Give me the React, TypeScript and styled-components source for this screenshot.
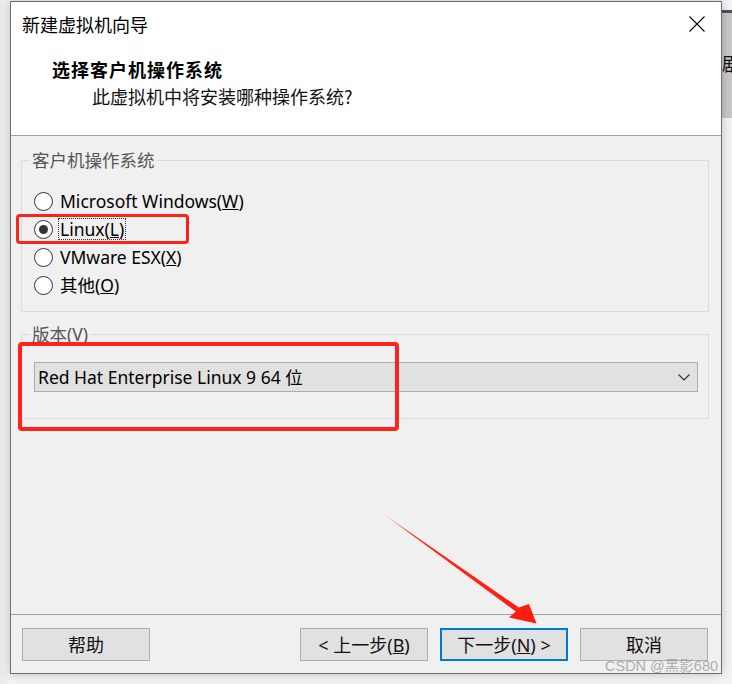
import React from "react";
import styled, { createGlobalStyle, css } from "styled-components";

const GlobalStyle = createGlobalStyle`
  html, body {
    margin: 0;
    padding: 0;
    background: #f4f4f4;
    width: 732px;
    height: 684px;
    overflow: hidden;
  }
  * { box-sizing: border-box; }
`;

const UI_FONT = `"Noto Sans", "Noto Sans CJK SC", sans-serif`;
const CJK_FONT = `"Noto Sans CJK SC", "Noto Sans", sans-serif`;

const Stage = styled.div`
  position: relative;
  width: 732px;
  height: 684px;
  padding: 1px 0 0 10px;
  background: linear-gradient(to right, #e9e9e9 0px, #f3f3f3 10px);
`;

const BehindWindow = styled.div`
  position: absolute;
  left: 722px;
  top: 10px;
  width: 10px;
  height: 108px;
  background: #c7c7c7;
  border-top: 3px solid #4b5361;
  overflow: hidden;
  font-family: ${CJK_FONT};
  font-size: 18px;
  line-height: 20px;
  color: #111;
  padding-top: 40px;
`;

const Dialog = styled.div`
  position: relative;
  width: 712px;
  height: 673px;
  border: 1px solid #6f6f6f;
  background: #f0f0f0;
  display: flex;
  flex-direction: column;
  box-shadow: 0 0 9px rgba(0, 0, 0, 0.22);
`;

const Header = styled.div`
  height: 134px;
  flex: none;
  background: #ffffff;
  border-bottom: 1px solid #a0a0a0;
  display: flex;
  flex-direction: column;
`;

const TitleBar = styled.div`
  height: 43px;
  display: flex;
  align-items: center;
  justify-content: space-between;
  padding: 0 16px 0 11px;
`;

const Title = styled.div`
  font-family: ${CJK_FONT};
  font-size: 18px;
  line-height: 24px;
  color: #000;
`;

const CloseButton = styled.div`
  width: 16px;
  height: 16px;
  display: flex;
`;

const Heading = styled.div`
  margin-top: 12px;
  padding-left: 41px;
  font-family: ${CJK_FONT};
  font-size: 18px;
  font-weight: 700;
  letter-spacing: 1px;
  line-height: 24px;
  color: #000;
`;

const Subtitle = styled.div`
  margin-top: 3px;
  padding-left: 81px;
  font-family: ${CJK_FONT};
  font-size: 18px;
  line-height: 24px;
  color: #111;
`;

const Body = styled.div`
  flex: 1;
  padding: 14px 12px 0 10px;
  display: flex;
  flex-direction: column;
  gap: 12px;
`;

const Group = styled.fieldset<{ $pt: number; $pb: number }>`
  margin: 0;
  border: 1px solid #dcdcdc;
  padding: ${(p) => p.$pt}px 10px ${(p) => p.$pb}px 12px;
  min-width: 0;
`;

const Legend = styled.legend`
  margin-left: -4px;
  padding: 0 2px;
  font-family: ${UI_FONT};
  font-size: 17.5px;
  line-height: 20px;
  color: #555;
`;

const RadioList = styled.div`
  display: flex;
  flex-direction: column;
`;

const RadioRow = styled.div`
  height: 28px;
  display: flex;
  align-items: center;
`;

const RadioCircle = styled.span<{ $checked?: boolean }>`
  width: 19px;
  height: 19px;
  border-radius: 50%;
  border: 1px solid #333;
  background: #fff;
  display: flex;
  align-items: center;
  justify-content: center;
  flex: none;
  &::after {
    content: "";
    width: 9px;
    height: 9px;
    border-radius: 50%;
    background: ${(p) => (p.$checked ? "#333" : "transparent")};
  }
`;

const RadioLabel = styled.span<{ $focused?: boolean }>`
  margin-left: 5px;
  padding: 0 1px;
  font-family: ${UI_FONT};
  font-size: 17.5px;
  line-height: 20px;
  color: #000;
  border: 1px dotted transparent;
  ${(p) =>
    p.$focused &&
    css`
      border-color: #333;
    `}
`;

const Select = styled.div`
  height: 30px;
  border: 1px solid #adadad;
  background: #e1e1e1;
  display: flex;
  align-items: center;
  justify-content: space-between;
  padding: 0 7px 0 3px;
`;

const SelectText = styled.span`
  font-family: ${UI_FONT};
  font-size: 17.5px;
  line-height: 20px;
  color: #000;
`;

const Footer = styled.div`
  height: 59px;
  flex: none;
  border-top: 1px solid #a0a0a0;
  padding: 13px 13px 0 11px;
  display: flex;
  align-items: flex-start;
  justify-content: space-between;
`;

const ButtonGroup = styled.div`
  display: flex;
  gap: 12px;
`;

const Button = styled.div<{ $primary?: boolean }>`
  width: 128px;
  height: 33px;
  border: ${(p) => (p.$primary ? "2px solid #0078d7" : "1px solid #adadad")};
  background: #e1e1e1;
  display: flex;
  align-items: center;
  justify-content: center;
  font-family: ${UI_FONT};
  font-size: 18px;
  color: #111;
  line-height: 20px;
`;

const RedBox = styled.div<{ $x: number; $y: number; $w: number; $h: number; $b: number }>`
  position: absolute;
  left: ${(p) => p.$x}px;
  top: ${(p) => p.$y}px;
  width: ${(p) => p.$w}px;
  height: ${(p) => p.$h}px;
  border: ${(p) => p.$b}px solid #fe2218;
  border-radius: 4px;
  pointer-events: none;
`;

const Arrow = styled.svg`
  position: absolute;
  left: 0;
  top: 0;
  width: 732px;
  height: 684px;
  pointer-events: none;
`;

const Watermark = styled.div`
  position: absolute;
  left: 605px;
  top: 657px;
  font-family: "Liberation Sans", "Noto Sans CJK SC", sans-serif;
  font-size: 14.5px;
  line-height: 18px;
  color: rgba(160, 160, 160, 0.85);
  white-space: nowrap;
`;

const radios = [
  { label: "Microsoft Windows(", key: "W", checked: false },
  { label: "Linux(", key: "L", checked: true },
  { label: "VMware ESX(", key: "X", checked: false },
  { label: "其他(", key: "O", checked: false },
];

export default function App() {
  return (
    <>
      <GlobalStyle />
      <Stage>
        <BehindWindow>剧</BehindWindow>
        <Dialog>
          <Header>
            <TitleBar>
              <Title>新建虚拟机向导</Title>
              <CloseButton>
                <svg width="16" height="16" viewBox="0 0 16 16">
                  <path d="M0.5 0.5 L15.5 15.5 M15.5 0.5 L0.5 15.5" stroke="#000" strokeWidth="1.1" fill="none" />
                </svg>
              </CloseButton>
            </TitleBar>
            <Heading>选择客户机操作系统</Heading>
            <Subtitle>此虚拟机中将安装哪种操作系统?</Subtitle>
          </Header>
          <Body>
            <Group $pt={17} $pb={12}>
              <Legend>客户机操作系统</Legend>
              <RadioList>
                {radios.map((r) => (
                  <RadioRow key={r.key}>
                    <RadioCircle $checked={r.checked} />
                    <RadioLabel $focused={r.checked}>
                      {r.label}
                      <u>{r.key}</u>)
                    </RadioLabel>
                  </RadioRow>
                ))}
              </RadioList>
            </Group>
            <Group $pt={18} $pb={26}>
              <Legend>版本(V)</Legend>
              <Select>
                <SelectText>Red Hat Enterprise Linux 9 64 位</SelectText>
                <svg width="12" height="7" viewBox="0 0 12 7">
                  <path d="M0.5 0.5 L6 6 L11.5 0.5" stroke="#333" strokeWidth="1.2" fill="none" />
                </svg>
              </Select>
            </Group>
          </Body>
          <Footer>
            <Button>帮助</Button>
            <ButtonGroup>
              <Button>
                &lt; 上一步(<u>B</u>)
              </Button>
              <Button $primary>
                下一步(<u>N</u>) &gt;
              </Button>
              <Button>取消</Button>
            </ButtonGroup>
          </Footer>
        </Dialog>
        <RedBox $x={16} $y={214} $w={173} $h={30} $b={3.5} />
        <RedBox $x={18} $y={342} $w={381} $h={89} $b={4} />
        <Arrow viewBox="0 0 732 684">
          <defs>
            <linearGradient id="arrowGrad" x1="382" y1="513" x2="536" y2="623" gradientUnits="userSpaceOnUse">
              <stop offset="0" stopColor="#ff2a1a" stopOpacity="0.35" />
              <stop offset="0.2" stopColor="#ff2a1a" stopOpacity="1" />
              <stop offset="1" stopColor="#ff1a10" stopOpacity="1" />
            </linearGradient>
          </defs>
          <polygon
            points="382,513 518.8,607.5 529,604 536.5,623.5 509,617.5 515.8,611.6"
            fill="url(#arrowGrad)"
          />
        </Arrow>
        <Watermark>CSDN @黑影680</Watermark>
      </Stage>
    </>
  );
}
